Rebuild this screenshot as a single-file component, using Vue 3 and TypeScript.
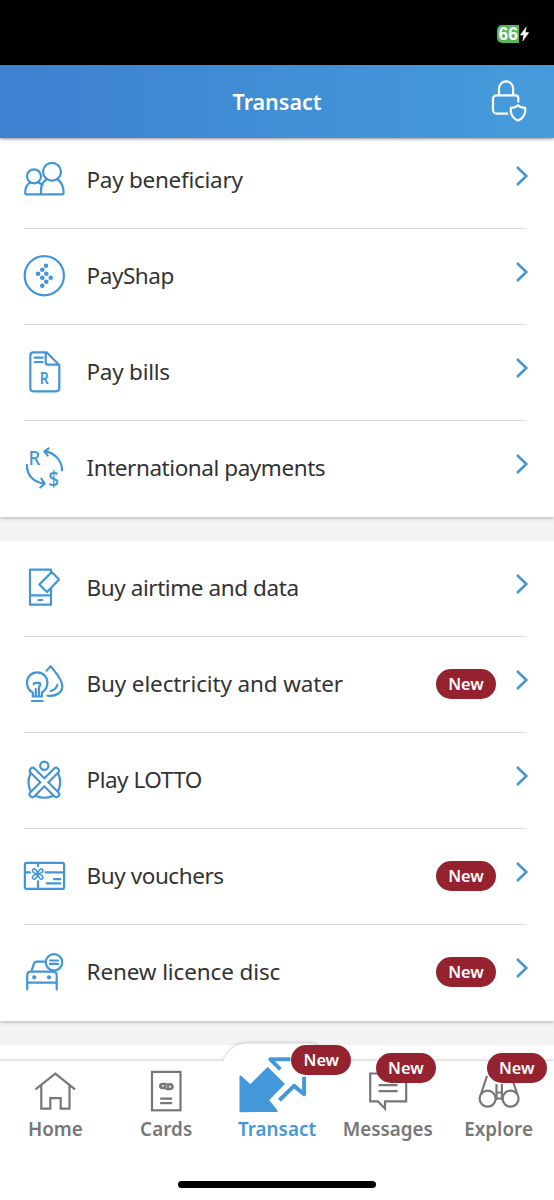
<script setup lang="ts">
interface Item {
  id: string
  label: string
  spacing: number
  isNew?: boolean
}

const payments: Item[] = [
  { id: 'beneficiary', label: 'Pay beneficiary', spacing: -0.27 },
  { id: 'payshap', label: 'PayShap', spacing: -0.43 },
  { id: 'bills', label: 'Pay bills', spacing: -0.25 },
  { id: 'international', label: 'International payments', spacing: -0.44 },
]
const purchases: Item[] = [
  { id: 'airtime', label: 'Buy airtime and data', spacing: -0.42 },
  { id: 'electricity', label: 'Buy electricity and water', spacing: -0.13 },
  { id: 'lotto', label: 'Play LOTTO', spacing: -0.48 },
  { id: 'vouchers', label: 'Buy vouchers', spacing: -0.42, isNew: true },
  { id: 'licence', label: 'Renew licence disc', spacing: -0.12, isNew: true },
]
purchases[1].isNew = true
const groups: Item[][] = [payments, purchases]

const tabs: Item[] = [
  { id: 'home', label: 'Home', spacing: 0 },
  { id: 'cards', label: 'Cards', spacing: 0.1 },
  { id: 'transact', label: 'Transact', spacing: 0.05, isNew: true },
  { id: 'messages', label: 'Messages', spacing: 0, isNew: true },
  { id: 'explore', label: 'Explore', spacing: 0.05, isNew: true },
]
const payshapDots = [
  [46, 13.7], [42.3, 17.7], [38, 21.7], [46.3, 21.7],
  [42.3, 25.7], [50.7, 25.7], [46.3, 29.7], [42.3, 33.7],
]
</script>

<template>
  <div class="screen">
    <div class="status">
      <span class="battery">66</span>
      <svg class="bolt" width="9" height="14" viewBox="0 0 9 14"><path d="M6.300 0 0.300 8H3.800L2.800 14 8.800 5.500H5.200Z" fill="#fff" stroke="#fff" stroke-width=".5" /></svg>
    </div>
    <header class="header">
      <h1>Transact</h1>
      <svg class="lock" width="40" height="44" viewBox="490 79 40 44">
        <path d="M499 95.3V88.5a7.1 7.1 0 0 1 14.2 0V95.3M518.3 101.7V98.3a3 3 0 0 0-3-3H496.500a3.500 3.500 0 0 0-3.500 3.500V109.700a4 4 0 0 0 4 4H507.300" />
        <path d="M518 105.200C516 107.200 513.500 107.800 510.800 107.800V111C511 116 513.500 118.500 518 120.600C522.500 118.500 525 116 525.200 111V107.800C522.500 107.800 520 107.200 518 105.200Z" />
      </svg>
    </header>

    <main class="content">
      <section v-for="(group, g) in groups" :key="g" class="group">
        <div v-for="item in group" :key="item.id" class="row">
          <svg class="icon" width="48" height="48" viewBox="20 0 48 48">
            <g v-if="item.id === 'beneficiary'">
              <circle cx="34" cy="20.300" r="7" /><circle cx="52" cy="15.700" r="8.900" />
              <path d="M41 38.300H26.300Q25.200 38.300 25.200 37C25.200 31.500 27.300 28 30.500 26.300M37.800 26.300Q40.500 27.300 42.500 29.200M46.700 23.200C43 25.500 41 29.500 41 34.500V38.300H62.300Q63.600 38.300 63.600 37C63.600 30.500 61.200 25.600 57.300 23.200" />
            </g>
            <g v-else-if="item.id === 'payshap'">
              <circle cx="44.300" cy="23.700" r="19.600" />
              <circle v-for="(d, i) in payshapDots" :key="i" class="solid" :cx="d[0]" :cy="d[1]" r="2.300" />
            </g>
            <g v-else-if="item.id === 'bills'">
              <path d="M45.700 4.300H33.500Q30.300 4.300 30.300 7.500V40Q30.300 43.300 33.500 43.300H56Q59.300 43.300 59.300 40V17L46.500 4.300M45.700 4.300V14.500Q45.700 16.700 48 16.700H59.300M34.700 9.700H42.700M34.700 14H42.700" />
              <text transform="translate(44.300 36) scale(.88 1)" font-size="16" font-weight="600" text-anchor="middle">R</text>
            </g>
            <g v-else-if="item.id === 'international'">
              <text transform="translate(28.400 20.500) scale(.93 1)" font-size="20" font-weight="500">R</text>
              <text transform="translate(48.300 41.500) scale(.86 1)" font-size="22" font-weight="500">$</text>
              <path d="M62 26.300C62.200 17 55 8.800 44.800 7.300M48.600 4.300 44.300 7.300 47.700 11.700M27 21C26.400 31 34 38.800 44.400 39.600M41.300 34.600 44.700 39.700 40.300 43.500" />
            </g>
            <g v-else-if="item.id === 'airtime'">
              <path d="M51 8V5.700H30V40.700H51V25M30 31.300H51M38.500 36H42.300M51.700 8 59 15.500 47 28 39.300 20.500Z" />
            </g>
            <g v-else-if="item.id === 'electricity'">
              <path d="M32.800 36.500V32.500C29 30.500 26.900 26.500 27 22.500A10.200 10.200 0 0 1 47.400 22.500C47.400 26.500 45 30.500 42 32.500V36.500ZM32 41H42.600M35.800 36V29M39 36V26.500C41 25.500 40.800 22.800 38.500 22.800H36Q33.700 22.800 33.700 24.300" />
              <path d="M46.500 10.700 50.700 6.200C54.500 11.500 62.300 19 62.300 26C62.300 32 57 36.800 47.500 35.600M57.300 25Q56 29.500 50.700 31" />
            </g>
            <g v-else-if="item.id === 'lotto'">
              <circle cx="44.300" cy="9.700" r="4.100" />
              <path d="M30.500 17.500Q26.500 26 30.500 35M58.200 17.500Q62.200 26 58.200 35M36 40Q44.300 43.500 52.700 40" />
              <path class="limb" d="M32.700 14.700 56.300 38.300M56 14.700 32.400 38.300" />
              <path class="limb-core" d="M32.700 14.700 56.300 38.300M56 14.700 32.400 38.300" />
            </g>
            <g v-else-if="item.id === 'vouchers'">
              <rect x="24.900" y="10.900" width="39.200" height="26" rx="2" />
              <path d="M25 20.300H30M45.500 20.300H64M38 11V14M38 29.300V37M54 27.200H60.300M46.700 31.400H60.300" />
              <path class="fine" d="M37.700 22C33 21.500 31.500 18.500 33 17.300C34.500 16 37 18 37.700 22C38.400 18 41 16 42.400 17.300C43.800 18.500 42.400 21.500 37.700 22C42.400 22.500 43.800 25.500 42.400 26.700C41 28 38.400 26 37.700 22C37 26 34.500 28 33 26.700C31.500 25.500 33 22.500 37.700 22Z" />
            </g>
            <g v-else>
              <circle cx="54" cy="14.300" r="8.200" />
              <path d="M50 12.500H58M50 15.900H58M45.500 13.700H37Q34.700 13.700 33.900 15.800L31.300 23.300M27.200 41.500V27.500Q27.200 23.700 31 23.700H53Q56.700 23.700 56.700 27.500V41.500M27.200 34.700H56.700" />
              <circle class="solid" cx="34.300" cy="29.300" r="2.100" /><circle class="solid" cx="49" cy="29.300" r="2.100" />
            </g>
          </svg>
          <span class="label" :style="{ letterSpacing: item.spacing + 'px' }">{{ item.label }}</span>
          <span v-if="item.isNew" class="pill">New</span>
          <svg class="chevron" width="14" height="22" viewBox="0 0 14 22"><path d="M2 2 11.300 11 2 20" /></svg>
        </div>
      </section>
      <section class="group next"></section>
    </main>

    <nav class="nav">
      <svg class="bump" width="130" height="34" viewBox="212 1036 130 34">
        <path d="M223 1061C228 1052 233 1043.500 248 1043.500H306C321 1043.500 326 1052 331 1061V1070H223Z" />
      </svg>
      <div v-for="tab in tabs" :key="tab.id" class="tab" :class="tab.id">
        <svg width="110" height="58" viewBox="0 0 110 58">
          <path v-if="tab.id === 'home'" d="M35.500 33.300 55.300 17.700 75 33.300M41.300 29.500V52.700H50.300V42.200H60.700V52.700H69.500V29.500" />
          <g v-else-if="tab.id === 'cards'">
            <rect x="41" y="15.900" width="28.500" height="38.400" />
            <path d="M49.200 42.700H61.200M49.200 47.200H61.200" />
            <path class="mark" d="M55.500 28H52Q49.300 28 49.300 30T52 32H54V29.500M55 33H58.500Q61.500 33 61.500 30.500T58.500 28.500H57V31.500" />
          </g>
          <g v-else-if="tab.id === 'transact'">
            <path class="solid" d="M18.500 20.500 28.300 29.500 45.700 12.300 61.500 28 46.500 43.200Q46 44 46.500 45L54.700 54.900 18.500 55.200Z" />
            <path class="bold" d="M68.400 3.300H48.400L58.400 13.300M57.400 44.300 72.100 29.900 82.100 38.300V20.700" />
          </g>
          <path v-else-if="tab.id === 'messages'" d="M37.200 17.500H73.200V45.300H52V52.500L44.800 45.300H37.200ZM45.600 29.200H64.600M45.600 35.200H64.600" />
          <g v-else>
            <circle cx="43.600" cy="42.700" r="8" /><circle cx="66.600" cy="42.700" r="8" />
            <path d="M37 38 43 20M73.200 38 67.200 20M52.500 28V44M57.900 28V44M52.500 36.500H57.900M51 42.500H59.500" />
          </g>
        </svg>
        <span class="tab-label" :style="{ letterSpacing: tab.spacing + 'px' }">{{ tab.label }}</span>
        <span v-if="tab.isNew" class="pill badge">New</span>
      </div>
      <div class="home-bar"></div>
    </nav>
  </div>
</template>

<style>
body { margin: 0; }
</style>

<style scoped>
.screen { width: 554px; height: 1200px; position: relative; overflow: hidden; background: #f3f3f3; font-family: "Noto Sans", "Open Sans", sans-serif; display: flex; flex-direction: column; }
.status { height: 65px; background: #000; flex: none; display: flex; align-items: flex-start; box-sizing: border-box; padding: 25px 0 0 497px; }
.battery { width: 21.500px; height: 18px; border-radius: 5px 0 0 5px; background: #55b757; color: #fff; font: bold 17.500px/19px "Liberation Sans", sans-serif; text-indent: 1.500px; white-space: nowrap; }
.bolt { margin: 2px 0 0 1px; }
.header { position: relative; z-index: 2; flex: none; height: 72.500px; background: linear-gradient(90deg, #3e80d0, #4398d9 85%, #469cdb); box-shadow: 0 1px 3px rgba(0,0,0,.45); display: flex; align-items: center; justify-content: center; }
h1 { margin: 2px 0 0; color: #fff; font-size: 21.500px; line-height: 30px; font-weight: 600; }
.lock { position: absolute; left: 490px; top: 14px; fill: none; stroke: #fff; stroke-width: 2.200; stroke-linecap: round; stroke-linejoin: round; }
.content { flex: none; margin-top: -5.500px; }
.group { display: flow-root; background: #fff; box-shadow: 0 2px 3px rgba(0,0,0,.18); margin-bottom: 24px; padding: 0 27px 0 20px; }
.group .row:last-child { height: 97px; padding-bottom: 1px; }
.group + .group .row:first-child { margin-top: -1px; }
.next { height: 60px; }
.row { height: 96px; box-sizing: border-box; display: flex; align-items: center; position: relative; }
.row:not(:last-child)::after { content: ""; position: absolute; left: 4px; right: 0; bottom: -1px; height: 1px; background: #dcdddd; }
.icon, .chevron { flex: none; fill: none; stroke: #4296d8; stroke-width: 2.200; stroke-linecap: round; stroke-linejoin: round; }
.icon text { fill: #4296d8; stroke: none; }
.icon .solid { fill: #4296d8; stroke: none; }
.icon .limb { stroke-width: 7.800; }
.icon .limb-core { stroke: #fff; stroke-width: 3.600; }
.icon .fine { stroke-width: 1.500; }
.label { margin-left: 18.500px; flex: 1; white-space: nowrap; color: #333; font-size: 22.500px; line-height: 30px; }
.pill { width: 60px; height: 30px; flex: none; border-radius: 15px; background: #95232f; color: #fff; font-size: 16.300px; font-weight: 600; line-height: 30px; text-align: center; }
.chevron { margin: -9px -2px 0 19px; stroke-width: 2.500; stroke-linecap: butt; stroke-linejoin: miter; }
.nav { position: absolute; left: 0; right: 0; top: 1061px; height: 139px; background: #fff; box-shadow: 0 -1px 3px rgba(0,0,0,.2); display: flex; z-index: 3; }
.bump { position: absolute; left: 212px; top: -25px; fill: #fff; filter: drop-shadow(0 -1px 1.500px rgba(0,0,0,.18)); clip-path: inset(0 0 8px 0); }
.tab { position: relative; flex: 1; display: flex; flex-direction: column; align-items: center; margin-top: -5px; color: #777; }
.tab svg { fill: none; stroke: #777; stroke-width: 2.200; flex: none; }
.tab .mark { stroke-width: 2.600; }
.tab .solid { fill: #4398da; stroke: #4398da; stroke-width: 2; stroke-linejoin: round; }
.tab .bold { stroke: #4398da; stroke-width: 4; stroke-linejoin: round; }
.tab-label { font-size: 18.800px; line-height: 26px; font-weight: 600; margin-top: 2px; white-space: nowrap; }
.transact { color: #4398da; }
.badge { position: absolute; left: 43.500px; top: -3px; }
.transact .badge { left: 69.700px; top: -11px; }
.home-bar { position: absolute; left: 178px; top: 120px; width: 198px; height: 7px; border-radius: 4px; background: #000; }
</style>
